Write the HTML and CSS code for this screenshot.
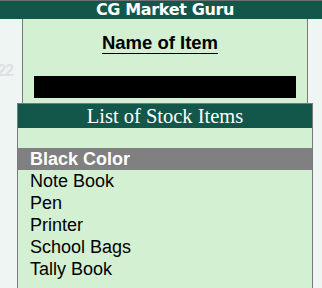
FILE: index.html
```html
<!DOCTYPE html>
<html lang="en">
<head>
    <meta charset="UTF-8">
    <meta name="viewport" content="width=device-width, initial-scale=1.0">
    <title>CG Market Guru - Stock Item</title>
    <link rel="stylesheet" href="styles.css">
</head>
<body>
    <header class="title-bar">CG Market Guru</header>

    <div class="screen">
        <div class="side side-left">
            <span class="ghost-num">22</span>
        </div>

        <main class="panel">
            <div class="field-title">
                <span>Name of Item</span>
            </div>
            <div class="field-input"></div>
        </main>

        <div class="side side-right"></div>

        <!-- popup list, sits over the panel -->
        <section class="stock-list">
            <h2 class="stock-list-head">List of Stock Items</h2>
            <ul class="stock-items">
                <li class="selected">Black Color</li>
                <li>Note Book</li>
                <li>Pen</li>
                <li>Printer</li>
                <li>School Bags</li>
                <li>Tally Book</li>
            </ul>
        </section>
    </div>
</body>
</html>
```

FILE: styles.css
```css
/* Global styles */
html {
    overflow: hidden;
}

body {
    margin: 0;
    padding: 0;
    width: 322px;
    height: 288px;
    overflow: hidden;
    background-color: #eef5f3;
    font-family: "Liberation Sans", Arial, sans-serif;
}

/* Title bar */
.title-bar {
    height: 18px;
    line-height: 18px;
    border-top: 1px solid #6e6e6e;
    background-color: #13574a;
    color: #fff;
    font-family: "DejaVu Sans", Verdana, sans-serif;
    font-weight: bold;
    font-size: 16px;
    letter-spacing: -0.35px;
    text-align: center;
    padding-left: 8px;
}

/* Main area */
.screen {
    position: relative;
    display: flex;
    height: 269px;
}

.side {
    background-color: #eef5f3;
}

.side-left {
    width: 22px;
    overflow: hidden;
    display: flex;
    justify-content: flex-end;
    align-items: flex-start;
}

.ghost-num {
    margin-top: 43px;
    margin-right: 9px;
    color: #dde1e1;
    font-weight: bold;
    font-size: 16px;
    letter-spacing: -1px;
}

.side-right {
    flex: 1;
}

.panel {
    width: 284px;
    border-left: 1px solid #7a7a7a;
    border-right: 1px solid #7a7a7a;
    background-color: #d3f0d3;
}

.field-title {
    padding-top: 14px;
    padding-right: 10px;
    text-align: center;
}

.field-title span {
    display: inline-block;
    line-height: 20px;
    font-size: 18.5px;
    font-weight: bold;
    color: #000;
    border-bottom: 1px solid #000;
}

.field-input {
    width: 262px;
    height: 22px;
    margin: 22px 0 0 11px;
    background-color: #000;
}

/* Stock item popup */
.stock-list {
    position: absolute;
    left: 17px;
    top: 84px;
    width: 294px;
    height: 184px;
    border: 1px solid #7a7a7a;
    border-bottom: none;
    background-color: #d3f0d3;
}

.stock-list-head {
    margin: 0;
    height: 24px;
    line-height: 24px;
    background-color: #13574a;
    color: #fff;
    font-family: "Liberation Serif", "Times New Roman", serif;
    font-weight: normal;
    font-size: 20.5px;
    text-align: center;
}

.stock-items {
    list-style-type: none;
    margin: 20px 0 0 0;
    padding: 0;
}

.stock-items li {
    height: 22px;
    line-height: 22px;
    padding-left: 12px;
    font-size: 18px;
    color: #000;
}

.stock-items li.selected {
    background-color: #808080;
    color: #fff;
    font-weight: bold;
}
```
